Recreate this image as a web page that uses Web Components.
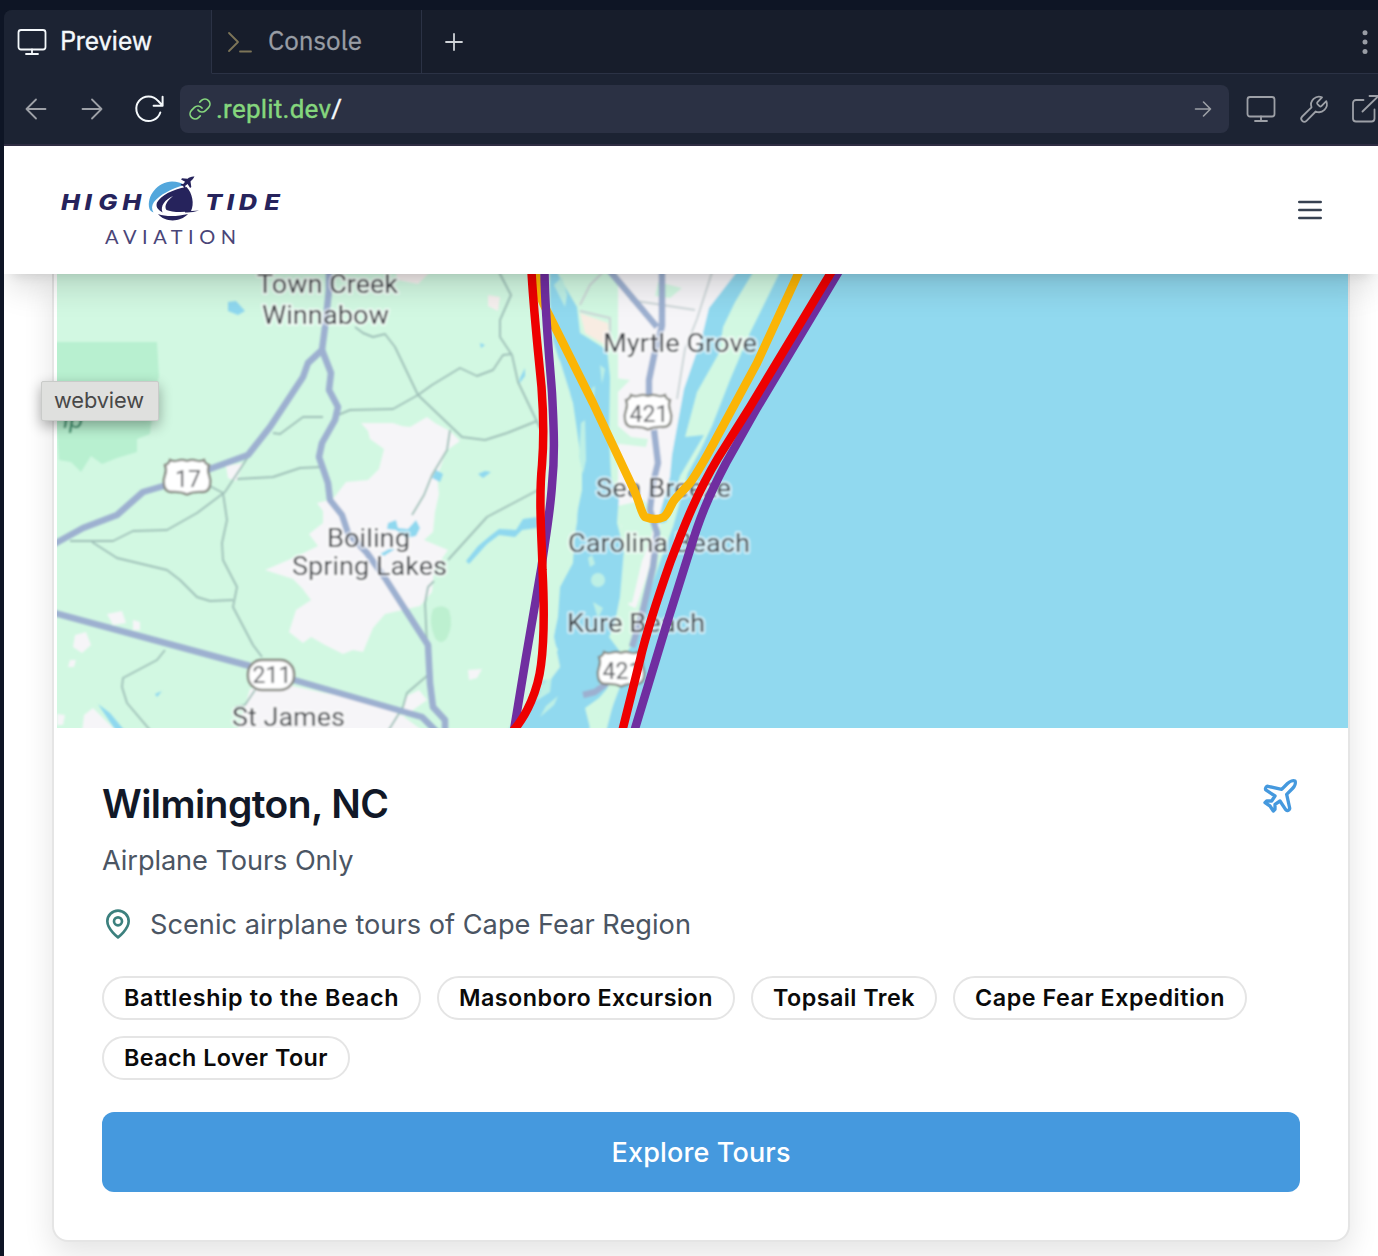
<!DOCTYPE html>
<html lang="en">
<head>
<meta charset="utf-8">
<title>High Tide Aviation</title>
<style>
html,body{margin:0;height:100%;overflow:hidden;background:#0e1525}
body{font-family:Inter,"Liberation Sans",sans-serif}
</style>
</head>
<body>
<preview-window></preview-window>
<script>
const define = (name, html, setup) => customElements.define(name, class extends HTMLElement {
  constructor(){ super(); this.attachShadow({mode:'open'}).innerHTML = html; }
  connectedCallback(){ if (setup) setup(this); }
});

/* Text whose tracking is set so that the run fills a given width */
define('tracked-text', `<style>:host{display:inline-block;white-space:nowrap}span{display:inline-block}</style><span><slot></slot></span>`, el => {
  const run = el.shadowRoot.querySelector('span');
  const w = +el.getAttribute('width');
  requestAnimationFrame(() => {
    const n = el.textContent.length;
    const s = (w - run.getBoundingClientRect().width) / (n - 1);
    el.style.letterSpacing = s.toFixed(3) + 'px';
    run.style.marginRight = (-s).toFixed(3) + 'px';
  });
});

const ICONS = {
  monitor:[30,28,'<rect x="1.5" y="2" width="27" height="19.5" rx="2.5"/><path d="M15 21.5v4.500M9 26h12"/>'],
  prompt:[26,24,'<path d="M2 3 11 12l-9 9M13 21.500h11"/>'],
  plus:[20,20,'<path d="M10 2v16M2 10h16"/>'],
  dots:[8,26,'<g fill="currentColor" stroke="none"><circle cx="4" cy="3.700" r="2.500"/><circle cx="4" cy="13" r="2.500"/><circle cx="4" cy="22.400" r="2.500"/></g>'],
  back:[22,22,'<path d="M20.500 11H1.500M11 1.500 1.500 11 11 20.500"/>'],
  forward:[22,22,'<path d="M1.500 11h19M11 1.500l9.500 9.500L11 20.500"/>'],
  go:[18,18,'<path d="M1.500 9h15M9.500 2 16.500 9 9.500 16"/>'],
  reload:[30,28,'<path d="M26.300 17.500A12.300 12.300 0 1 1 24 5.800l4.500 4.700M28.600 1.800v8.900h-9"/>'],
  link:[24,24,'<path d="M10 13a5 5 0 0 0 7.540.54l3-3a5 5 0 0 0-7.070-7.070l-1.720 1.710"/><path d="M14 11a5 5 0 0 0-7.540-.54l-3 3a5 5 0 0 0 7.070 7.070l1.710-1.710"/>'],
  wrench:[30,30,'<path d="M18.500 8.200a1.400 1.400 0 0 0 0 1.900l2 2a1.400 1.400 0 0 0 1.900 0l4.900-4.900a8 8 0 0 1-10.600 10.300L7.500 26.800a3 3 0 0 1-4.300-4.300l9.300-9.200A8 8 0 0 1 23 3.300z"/>'],
  external:[30,30,'<path d="M12.500 6H5a3 3 0 0 0-3 3v15.500a3 3 0 0 0 3 3h15.500a3 3 0 0 0 3-3V15.500M11.500 17.500 27.500 2M18.500 2H28v9.500"/>'],
  menu:[24,24,'<path d="M4 6h16M4 12h16M4 18h16"/>'],
  pin:[24,24,'<path d="M20 10c0 6-8 12-8 12s-8-6-8-12a8 8 0 0 1 16 0Z"/><circle cx="12" cy="10" r="3"/>'],
  plane:[24,24,'<path d="M17.800 19.200 16 11l3.500-3.500C21 6 21.500 4 21 3c-1-.5-3 0-4.500 1.500L13 8 4.800 6.200c-.5-.1-.9.1-1.100.5l-.3.5c-.2.5-.1 1 .3 1.300L9 12l-2 3H4l-1 1 3 2 2 3 1-1v-3l3-2 3.500 5.300c.3.4.8.5 1.300.3l.5-.2c.4-.3.6-.7.5-1.200z"/>']
};
define('ui-icon', `<style>:host{display:block;flex:none;line-height:0}svg{display:block;overflow:visible;fill:none;stroke:currentColor;stroke-linecap:round;stroke-linejoin:round}</style><div></div>`, el => {
  const [w,h,body] = ICONS[el.getAttribute('name')];
  const k = (+el.getAttribute('size') || w) / w;
  el.shadowRoot.querySelector('div').innerHTML = `<svg width="${w*k}" height="${h*k}" viewBox="0 0 ${w} ${h}" stroke-width="${el.getAttribute('weight')||1.8}">${body}</svg>`;
});

define('tab-strip', `<style>
:host{display:flex;height:64px;background:#171d2b;font:400 26px/60px "IBM Plex Sans",Roboto,sans-serif;color:#999da5}
.tab{display:flex;align-items:center;box-sizing:border-box;border-bottom:1px solid #2b3245;border-right:1px solid #2b3245}
.on{width:208px;padding-left:13px;gap:13px;background:#1c2333;border-bottom-color:#1c2333;color:#f5f9fc}
.off{width:210px;padding-left:15px;gap:15px}
.off ui-icon{color:#7d7558}
.rest{flex:1;display:flex;align-items:center;justify-content:space-between;border-bottom:1px solid #2b3245;padding:0 9px 0 22px}
.rest ui-icon:first-child{color:#d0d3d8}
tracked-text{margin-top:-4px}
</style>
<div class="tab on"><ui-icon name="monitor"></ui-icon><tracked-text width="92" style="-webkit-text-stroke:.5px">Preview</tracked-text></div>
<div class="tab off"><ui-icon name="prompt"></ui-icon><tracked-text width="94" style="-webkit-text-stroke:.3px">Console</tracked-text></div>
<div class="rest"><ui-icon name="plus"></ui-icon><ui-icon name="dots"></ui-icon></div>`);

define('address-bar', `<style>
:host{display:flex;align-items:center;box-sizing:border-box;height:72px;background:#1c2333;border-bottom:2px solid #2f2d43;color:#9da0a7;padding-left:21px}
.nav{display:flex;align-items:center;gap:34px;width:155px;flex:none}
.nav ui-icon:last-child{color:#f5f9fc;margin-left:-3px}
.url{display:flex;align-items:center;flex:none;box-sizing:border-box;width:1049px;height:48px;border-radius:8px;background:#2b3144;padding:0 17px 0 8px;color:#85d67d;font:400 26px/48px Roboto,sans-serif}
.url tracked-text{margin-left:4px;-webkit-text-stroke:.4px}
b{font-weight:400;color:#f5f9fc}
.sp{flex:1}
.url ui-icon:last-child{color:#9da0a7}
.tools{display:flex;align-items:center;gap:22.500px;margin-left:17px}
</style>
<div class="nav"><ui-icon name="back"></ui-icon><ui-icon name="forward"></ui-icon><ui-icon name="reload" weight="2"></ui-icon></div>
<div class="url"><ui-icon name="link" weight="1.7"></ui-icon><tracked-text width="126">.replit.dev<b>/</b></tracked-text><div class="sp"></div><ui-icon name="go" weight="1.600"></ui-icon></div>
<div class="tools"><ui-icon name="monitor"></ui-icon><ui-icon name="wrench"></ui-icon><ui-icon name="external"></ui-icon></div>`);

define('brand-logo', `<style>:host{display:block;line-height:0}svg{display:block}</style>
<svg width="230" height="80" viewBox="56 170 230 80">
<g fill="#26235c" font-family="Inter,sans-serif" font-weight="800" font-size="21.500" font-style="italic">
<text transform="translate(61 209.500) scale(1.180 1)" x="0 20 31.500 52">HIGH</text>
<text transform="translate(206 209.500) scale(1.180 1)" x="-.8 17.500 27.800 49.300">TIDE</text></g>
<text x="105" y="243.500" fill="#4a4578" font-family="Lato,sans-serif" font-size="20" textLength="131">AVIATION</text>
<path d="M149.500 209C146 196 158 181.500 172 181.500c5 0 9.500 1.500 12.500 3.500-14 4-25 10-30.500 17-2.500 3.500-2.500 7-.5 10.500-2-1-3.500-2-4-3.500z" fill="#53a7dc"/>
<path d="M186.500 187c6 6 8 17 4.500 24-9 2-20 1-24.500-1-3-4 1-9.500 6.500-14-8 3.500-13 10-10.500 16.500-5-3-7-6-5.500-10 4-7 15-13 29.500-15.500z" fill="#26235c"/>
<path d="M158 214c8 3 20 2.500 30 0-8 8.500-23 8.500-30 0zM185 210.500q7 .8 14 0-7 2.500-14 2z" fill="#26235c"/>
<path d="M194.500 176.500c-1 2-3 4-4 5l.8 5.500-1.200 1-2.500-4-2.300 1.800v2l-1 .6-1.200-2.500-2.600-.9.700-1 2 0 1.900-2.300-4-2.200.9-1.300 5.600.5c1.700-1.500 4-2.500 6.900-2.200z" fill="#26235c"/>
</svg>`);

define('site-header', `<style>
:host{display:flex;align-items:center;justify-content:space-between;box-sizing:border-box;height:128px;flex:none;background:#fff;padding:0 52px;position:relative;z-index:2;box-shadow:0 20px 30px -6px #0002,0 8px 12px -8px #0002;color:#374151}
</style><brand-logo></brand-logo><ui-icon name="menu" size="32" weight="2"></ui-icon>`);

const label = (x, y, w, t) => `<text x="${x}" y="${y}" textLength="${w}" lengthAdjust="spacingAndGlyphs">${t}</text>`;
const shield = (x, y, w, h, t, r) => `<rect x="${x}" y="${y}" width="${w}" height="${h}" rx="${r}" fill="#fff" stroke="#858780" stroke-width="2.500"/><text class="n" x="${x+w/2+1}" y="${y+h/2+8.300}" text-anchor="middle">${t}</text>`;
const usShield = (x, y, t) => `<g transform="translate(${x} ${y})"><path d="M5 0q4 2 8 .5 4-1.500 9 .5 5-2 9-.5 4 1.500 8-.5 1 4 5 5-2 5 0 10 2 5 1 10-1 7-8 7-9-.5-15 2.500-6-3-15-2.500-7 0-8-7-1-5 1-10 2-5 0-10 4-1 5-5z" fill="#fff" stroke="#858780" stroke-width="2.300"/><text class="n" x="23" y="26.500" text-anchor="middle">${t}</text></g>`;

define('route-map', `<style>:host{display:block;line-height:0;margin-left:3px}svg{display:block}
text{font-family:Roboto,sans-serif;font-size:26px;fill:#3c4044;stroke:#fff;stroke-width:4px;stroke-opacity:.6;paint-order:stroke;stroke-linejoin:round}
.n{font-size:23px;stroke:none;fill:#5c5e62}
.major{fill:none;stroke:#9db0d0;stroke-width:6.500;stroke-linejoin:round}
.minor{fill:none;stroke:#9fc0b8;stroke-width:1.900;stroke-linejoin:round}
.route{fill:none;stroke-width:8.500;stroke-linejoin:round}
</style>
<svg width="1291" height="454" viewBox="57 274 1291 454">
<defs><filter id="s" filterUnits="userSpaceOnUse" x="40" y="260" width="1320" height="480"><feGaussianBlur stdDeviation=".8"/></filter></defs>
<rect x="57" y="274" width="1291" height="454" fill="#d2f8e2"/>
<g filter="url(#s)">
<path fill="#b8f0d0" d="M50 342H157l2 34-6 30-3 28-13 5v13l-20 6-15 6-11-8-10 16-10-10-12-2z"/>
<path fill="#bdf0d0" d="M433 609q9-6 16 1 5 15-2 28-6 8-12 0-7-16-2-29z"/>
<path fill="#8fd8ef" d="M228 302l8-1 9 10-7 4-10-4z"/>
<path fill="#f6f5f8" d="M393 423l9 3 8 1 17-10 8 6 15 8 10 10-14 10-4 12-5 13 2 18-4 18-2 20-9 8 24 10-14 20-2 22-12 14-35 8-12 14-10 24-10-2-10 4-18-9-14-8-8 6-14-11 7-22 15-10-9-12-9-9-28-9 28-12 25-12-9-12 14-11v-12l-6-8 16-4 13-17 22-2 11-11 5-20-14-10-2-8-7-8z"/>
<path fill="#f6f5f8" d="M250 689l38-4 36 8 54 10 26 14 22 16H237zM107 614l15-3 4 12-13 2zM133 620l7 2v8h-7zM75 635l11-3 5 13-9 8-9-6zM70 660h6l-2 7h-6zM57 714l8 1-2 10h-6zM84 715l9-7 25 25H82zM468 670l14-1-5 9-8 2zM405 697l14-7 8 10-14 10-10 7zM226 466l18-3-8 18-8-3z"/>
<path fill="#f6f0ef" d="M395 270h37l-14 14-20-4zM488 295l12 2-2 14-10-5z"/>
<path fill="#91d9ef" d="M779 264v10l-29 59-20 47-18 46-12 25-12 22-15 54-12 32-13 38-5 30-14 22-12 40-10 39V740H1360V264z"/>
<path fill="#f6f5f8" d="M570 264H744v10l-23 38-5 28-14 22-8 26-11 38-7 50-2 24-14 25-6 25-7 25-10 30-9 18 2-60-7-28-5-32V274z"/>
<path fill="#f8ece2" d="M580 313l28 10 2 25-25-15z"/>
<path fill="#d2f8e2" d="M658 282l24 6-12 10-15-2zM615 378l15 2-15 15zM611 420l20 17 17 2-2 8-35-4zM613 507l31-7 11 15-4 24-9 22-10 42-11-2-1-40 2-35zM618 600l17 8-4 40-14-8z"/>
<path fill="#91d9ef" d="M550 264h8v10l7 13 12 20 3 26 27 17 3 27-1 60 2 40 8 20-2 26 7 27-4 47-5 25-6 15 12 16L611 684 599 698 585 708 593 740H500L520 715 541 688 547 664 558 650 553 640 558 617 560 587 573 563 575 523 582 490V467L578 437 573 403 563 373 553 340 550 303z"/>
<path fill="#91d9ef" d="M743 264h9v10l-17 28-12 25-4 26-22 39-12 45 19-2-10 17-14 24-9 31-5 15-9 2 13-47 2-22 12-66 18-52 7-29z"/>
<path fill="#d2f8e2" d="M629 664L618 692 609 716 603 740H585L592 722 601 712 587 713 597 704 605 700 611 686 596 691 602 679z"/>
<path fill="#bdf0e5" d="M554 285l8-8 5 18-2 12zM570 357l7 5 5 22-7-14zM581 423l4-3 1 40-3 14-4-17zM598 573a7 7 0 1 1 0 14a7 7 0 1 1 0-14zM593 602l10 6-5 10zM588 558l4-3 3 9-5 3zM543 684l9-10-2 18-14 9zM546 706l12-10-4 9-14 12zM592 388l3-2-2 18zM600 365l5 4-3 15z"/>
<path fill="#d2f8e2" d="M553 350l7 11 10 32 5 48 4 40-2 41-6 36-13 33-4 46 6 30-9 12-9 2V350z"/>
<path fill="#8fd8ef" d="M466 561l12-15 12-10 9-7 17 1 7-11 14-2v11l-15 2-7 7-16-2-12 9-18 20zM98 704l12 9 20 24h-10zM388 523l8-3 2 8 10 1 8-9 4 8-4 8-10 2-10-8-9-1zM380 554l9-5 6 0-11 7zM436 470l7 4-3 8-8-4zM478 474l7-3 6 1-8 6zM155 694l7-3-5 6zM520 378l5-10v8l-6 8zM480 343l5 2-4 3z"/>
<g class="minor">
<path d="M273 433l7 1 23-17h20M338 415l12-5 43-1 25-14 14-10 28-17 17 8 16-6 10-15 9-1M237 479l36-2 27-9 22-1M248 457l-23 35-28 21-30 17-34 1-20 10H70M208 485l15 8 4 27-5 23 1 17 14 27-4 20 20 38 9 12M92 542l25 16 50 12 13 10 17 17 13 4 23-1M165 650l-8 10-34 18-1 9 5 16 28 33M355 327l8 6 10 4 12-3 10 13 23 48 44 42 23 3 22-7 30-12M496 264l4 10 11 21-11 25v17l12 18 6 27 22 46M540 489l-53 28-39 43M434 581l-6 6-3 16 2 42M428 675l-21 18-4 14-18 29M450 430l-3 20-15 25-8 20-12 20M255 690l-10 15-10 2"/>
<path d="M580 311l30 7v20M580 305l10-20 15-15M630 300l65 10M714 266l-17 53-12 30-8 50" stroke="#cbd4d6"/>
</g>
<g class="major">
<path d="M329 264v26l-4 37-3 23-14 13-5 14-33 50-22 28-41 15-40 15-24 7-26 23-34 13-36 20"/>
<path d="M322 350l9 23-2 17 9 17-3 13-13 23-3 14 9 26 2 17 12 15 6 18 19 20 18 25 43 67 2 38 3 24 12 13v18M47 611l203 55M294 680l76 22 52 15 18 18M662 264v62l-8 30-5 24v20M604 264l53 63M654 430l4 33-5 20-3 27 7 23-4 34-10 43-11 37M607 683l-12 9-12 3" />
</g>
${label(257,293,141,'Town Creek')}${label(262,324,127,'Winnabow')}${label(603,352,154,'Myrtle Grove')}${label(596,497,135,'Sea Breeze')}${label(568,552,182,'Carolina Beach')}${label(567,632,138,'Kure Beach')}${label(327,547,83,'Boiling')}${label(292,575,155,'Spring Lakes')}${label(232,726,113,'St James')}
<text x="63" y="428" font-style="italic" style="fill:#2f8b68;stroke:none">ip</text>
${usShield(626,395,'421')}${usShield(165,460,'17')}${usShield(599,652,'421')}${shield(248,660,46,30,'211',14)}
</g>
<path class="route" stroke="#fbb506" d="M536 274C538 298 546 308 552 321L593 403 634 490C640 503 641 513 645 517Q656 521 664 517C670 512 670 504 676 498L690 483C700 469 708 454 717 437L757 363 799 272"/>
<path class="route" stroke="#702ea0" d="M544.500 272C545 315 550 364 552 393 554 430 555 455 552 485 550 515 544 547 541.500 567L526 657 514 730M839 271L757 408 726 463C708 497 699 520 690 550L667 623 634 732"/>
<path class="route" stroke="#ee0000" d="M531.500 272C534 315 538 350 541.500 387 544 420 544 440 542 465 538 505 542 535 542.500 570 544 600 545 635 541 665 538 690 527 715 513 731M832 271L750 407 718 458C697 493 684 526 670 563 658 597 647 630 640 660L622 732"/>
</svg>`);

define('tour-badge', `<style>:host{display:flex;align-items:center;justify-content:center;box-sizing:border-box;height:44px;padding:0 20.500px 0 20px;border:2px solid #e5e5e5;border-radius:22px;font:600 23.300px/40px Inter,sans-serif;color:#0a0a0a}</style><slot></slot>`);

define('cta-button', `<style>:host{display:flex;align-items:center;justify-content:center;height:80px;border-radius:12px;background:#4599de;color:#fff;font:500 27px/42px Inter,sans-serif}::slotted(*){padding-top:2px}</style><slot></slot>`);

define('location-card', `<style>
:host{display:block;flex:none;box-sizing:border-box;height:968px;margin:0 28px 0 48px;background:#fff;border:2px solid #e5e5e5;border-top:0;border-radius:0 0 16px 16px;box-shadow:0 12px 30px #0000001c}
.body{padding:48px;display:flex;flex-direction:column;color:#4b5563;font:400 27.200px/40px Inter,sans-serif}
.head{display:flex;justify-content:space-between;height:56px}
h2{margin:0;font:600 39px/56px Inter,sans-serif;color:#111827}
.head ui-icon{color:#4599de}
.sub{margin-top:8px;height:40px;line-height:42px}
.where{display:flex;align-items:center;gap:16px;margin-top:24px;height:40px}
.where tracked-text{line-height:40px;padding-top:2px}
.where ui-icon{color:#3c807e}
.tags{display:flex;flex-wrap:wrap;gap:16px;margin:32px 0}
</style>
<route-map></route-map>
<div class="body">
<div class="head"><h2><tracked-text width="287">Wilmington, NC</tracked-text></h2><ui-icon name="plane" size="40" weight="2"></ui-icon></div>
<div class="sub"><tracked-text width="251.500">Airplane Tours Only</tracked-text></div>
<div class="where"><ui-icon name="pin" size="32" weight="2"></ui-icon><tracked-text width="541">Scenic airplane tours of Cape Fear Region</tracked-text></div>
<div class="tags">
<tour-badge><tracked-text width="274.500">Battleship to the Beach</tracked-text></tour-badge>
<tour-badge><tracked-text width="253.500">Masonboro Excursion</tracked-text></tour-badge>
<tour-badge><tracked-text width="141.500">Topsail Trek</tracked-text></tour-badge>
<tour-badge><tracked-text width="249.500">Cape Fear Expedition</tracked-text></tour-badge>
<tour-badge><tracked-text width="203.500">Beach Lover Tour</tracked-text></tour-badge>
</div>
<cta-button><tracked-text width="179">Explore Tours</tracked-text></cta-button>
</div>`);

define('hover-tip', `<style>:host{position:absolute;left:41px;top:381px;z-index:3;box-sizing:border-box;width:118px;height:40px;padding-left:12px;background:#dfe0de;border:1px solid #c9cbc9;border-radius:2px;box-shadow:0 5px 14px #0005;font:400 21.800px/37px Inter,sans-serif;color:#484848}</style><tracked-text width="90"><slot></slot></tracked-text>`, el => {
  el.shadowRoot.querySelector('tracked-text').textContent = el.getAttribute('text');
});

define('preview-window', `<style>
:host{display:flex;flex-direction:column;box-sizing:border-box;width:1378px;height:1256px;padding:10px 0 0 4px;overflow:hidden;background:#0e1525}
.pane{flex:1;min-height:0;display:flex;flex-direction:column;border-top-left-radius:8px;overflow:hidden}
.site{flex:1;min-height:0;overflow:hidden;display:flex;flex-direction:column;background:#fff}
tab-strip,address-bar{flex:none}
</style>
<div class="pane"><tab-strip></tab-strip><address-bar></address-bar>
<div class="site"><site-header></site-header><location-card></location-card></div></div>
<hover-tip text="webview"></hover-tip>`);
</script>
</body>
</html>
